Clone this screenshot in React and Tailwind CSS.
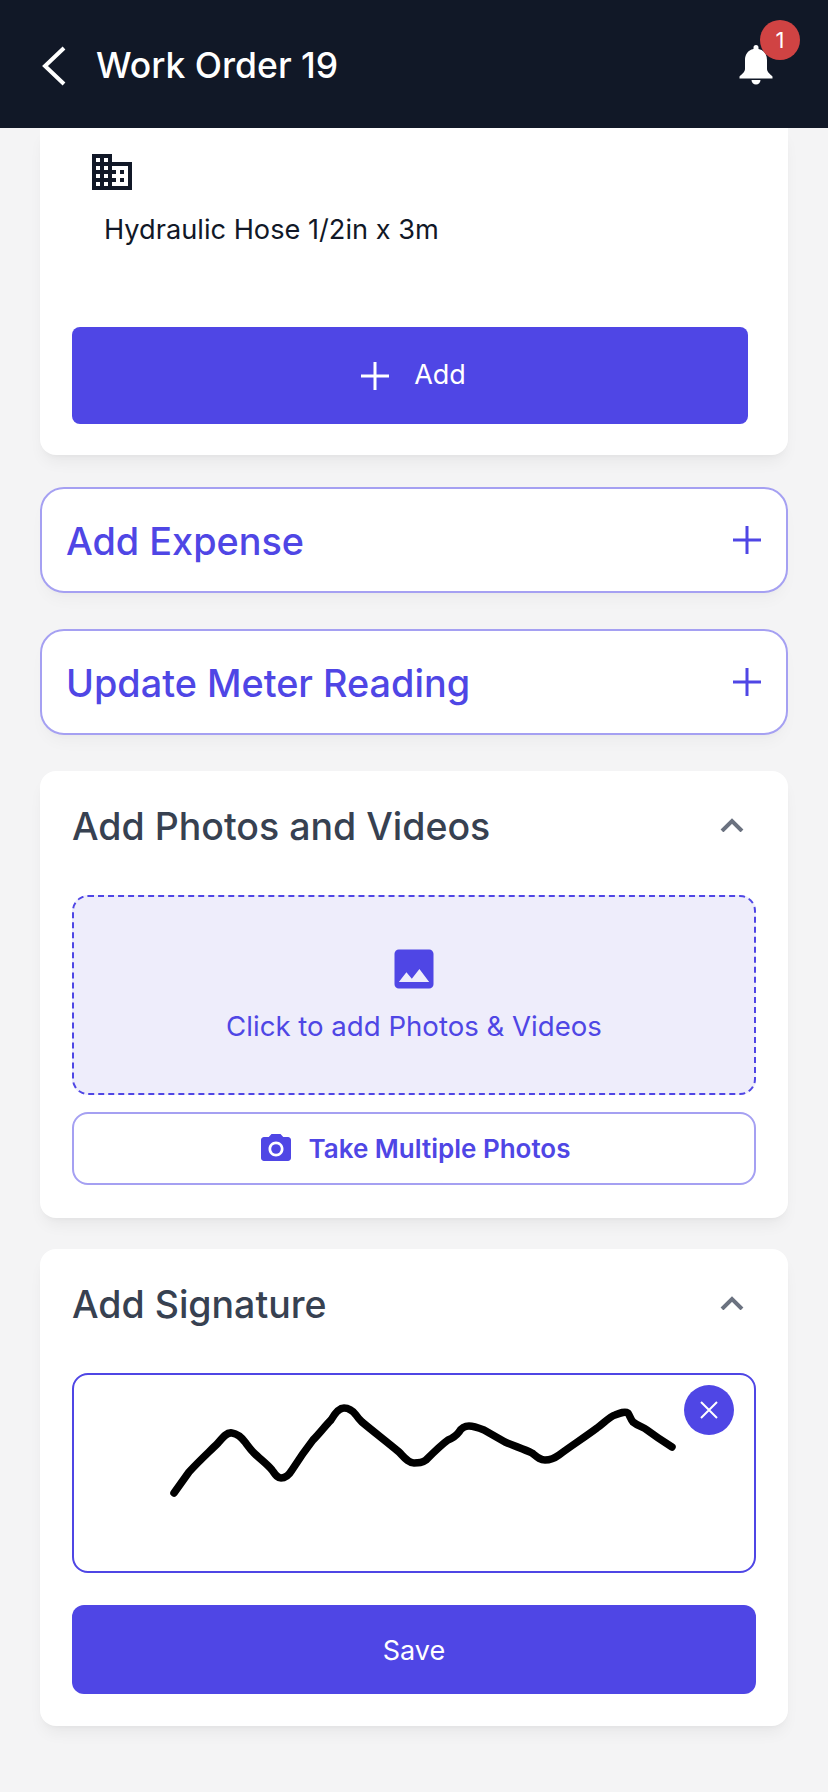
import { MdBusiness, MdImage, MdPhotoCamera } from "react-icons/md";

const signature =
  "M174 1493 L189 1472 C199 1461 209 1452 218 1443 C223 1437 227 1432 232 1433 C238 1434 242 1438 245 1442 C248 1446 250 1449 254 1453 C260 1459 267 1464 272 1470 C275 1474 277 1478 281 1478 C286 1478 289 1475 292 1470 C299 1459 306 1449 313 1440 C320 1433 325 1426 331 1420 C335 1413 339 1408 344 1408 C349 1408 353 1411 356 1415 C358 1418 360 1420 362 1422 C374 1432 387 1442 399 1452 C404 1457 408 1463 414 1463 C419 1463 422 1463 426 1460 C433 1453 441 1445 448 1440 C453 1438 456 1436 459 1432 C462 1427 465 1426 469 1426 C474 1426 479 1428 484 1430 C491 1434 498 1438 505 1442 C514 1446 524 1449 532 1453 C537 1457 540 1460 545 1460 C550 1460 555 1458 559 1455 C571 1446 585 1437 597 1428 C603 1424 609 1417 615 1415 C620 1413 625 1411 628 1413 C630 1416 631 1420 633 1422 C638 1426 643 1427 647 1430 C655 1436 664 1442 672 1447";

function PlusIcon({ className }) {
  return (
    <svg viewBox="0 0 28 28" className={className} fill="none" stroke="currentColor" strokeWidth="3">
      <path d="M14 0V28M0 14H28" />
    </svg>
  );
}

function ChevronUp() {
  return (
    <svg viewBox="0 0 24 14" className="w-6 h-[14px] text-[#6b7280]" fill="none" stroke="currentColor" strokeWidth="4">
      <path d="M2 13L12 3L22 13" />
    </svg>
  );
}

function AddRow({ label, className }) {
  return (
    <div className={`mx-[40px] h-[106px] flex items-center justify-between pl-[24px] pr-[25px] bg-white border-2 border-[#a5a0f2] rounded-[24px] shadow-lg shadow-black/3 ${className}`}>
      <span className="text-[37.8px] font-[450] text-[#4f46e5] pt-[2px]">{label}</span>
      <PlusIcon className="w-7 h-7 text-[#4f46e5]" />
    </div>
  );
}

function CardTitle({ children }) {
  return (
    <div className="flex items-center justify-between pr-[12px]">
      <h2 className="text-[37.5px] leading-[44px] font-[450] text-[#374151] mt-[2px] mb-[-2px]">{children}</h2>
      <ChevronUp />
    </div>
  );
}

export default function App() {
  return (
    <div className="h-[1792px] overflow-hidden bg-[#f4f4f5] font-['Inter',sans-serif]">
      {/* Header */}
      <header className="h-[128px] bg-[#111827] flex items-start justify-between pl-[42px] pr-[28px] relative z-10">
        <div className="flex items-center gap-[30px] mt-[44px]">
          <svg viewBox="0 0 24 40" className="w-6 h-10 text-white" fill="none" stroke="currentColor" strokeWidth="4">
            <path d="M22 2L3 20L22 38" />
          </svg>
          <h1 className="text-[35.5px] leading-[44px] font-[550] text-white">Work Order 19</h1>
        </div>
        <div className="relative w-[60px] h-[80px] mt-[20px]">
          <svg viewBox="0 0 34 40" className="absolute left-[-1px] top-[25px] w-[34px] h-[40px] fill-white">
            <path d="M17 0C15.4 0 14.5 1.2 14.5 2.6V4C8.8 5.2 6 9.6 6 15V24C6 27 3 29 0.5 31.5V33.5H33.5V31.5C31 29 28 27 28 24V15C28 9.6 25.200 5.200 19.500 4V2.600C19.500 1.200 18.600 0 17 0Z" />
            <path d="M12.500 35H21.500C21.500 37.500 19.500 39.500 17 39.500C14.500 39.500 12.500 37.500 12.500 35Z" />
          </svg>
          <span className="absolute left-[20px] top-0 w-10 h-10 rounded-full bg-[#d04343] text-white text-[22px] flex items-center justify-center">1</span>
        </div>
      </header>

      {/* Parts card, scrolled under the header */}
      <section className="mx-[40px] h-[327px] bg-white rounded-b-[16px] shadow-lg shadow-black/5 px-[32px] pt-[20px]">
        <MdBusiness className="w-12 h-12 ml-[16px] text-[#111827]" />
        <p className="ml-[32px] mt-[18px] text-[27.2px] leading-[32px] text-[#111827]">Hydraulic Hose 1/2in x 3m</p>
        <button className="mt-[81px] w-[676px] h-[97px] bg-[#4f46e5] rounded-[8px] flex items-center justify-center gap-[25px] pl-[7px] text-white text-[27px]">
          <PlusIcon className="w-7 h-7" />
          <span>Add</span>
        </button>
      </section>

      <AddRow label="Add Expense" className="mt-[32px]" />
      <AddRow label="Update Meter Reading" className="mt-[36px]" />

      {/* Photos */}
      <section className="mx-[40px] mt-[36px] h-[447px] bg-white rounded-[16px] shadow-lg shadow-black/5 px-[32px] pt-[32px]">
        <CardTitle>Add Photos and Videos</CardTitle>
        <div className="mt-[48px] h-[200px] bg-[#eeedfb] border-2 border-dashed border-[#4f46e5] rounded-[16px] flex flex-col items-center pt-[46px] text-[#4f46e5]">
          <MdImage className="w-[52px] h-[52px]" />
          <span className="mt-[13px] text-[27.6px] leading-[36px]">Click to add Photos &amp; Videos</span>
        </div>
        <button className="mt-[17px] w-full h-[73px] bg-white border-2 border-[#a5a0f2] rounded-[16px] flex items-center justify-center gap-[15px] text-[#4f46e5]">
          <MdPhotoCamera className="w-9 h-9" />
          <span className="text-[26px] font-semibold">Take Multiple Photos</span>
        </button>
      </section>

      {/* Signature */}
      <section className="mx-[40px] mt-[31px] h-[477px] bg-white rounded-[16px] shadow-lg shadow-black/5 px-[32px] pt-[32px]">
        <CardTitle>Add Signature</CardTitle>
        <div className="relative mt-[48px] h-[200px] bg-white border-2 border-[#4f46e5] rounded-[16px]">
          <svg viewBox="72 1373 684 200" className="absolute -inset-[2px] w-[684px] h-[200px]" fill="none" stroke="#000" strokeWidth="7.5" strokeLinecap="round" strokeLinejoin="round">
            <path d={signature} />
          </svg>
          <span className="absolute right-[20px] top-[10px] w-[50px] h-[50px] rounded-full bg-[#4f46e5] flex items-center justify-center">
            <svg viewBox="0 0 18 18" className="w-[18px] h-[18px]" fill="none" stroke="#fff" strokeWidth="2">
              <path d="M1 1L17 17M17 1L1 17" />
            </svg>
          </span>
        </div>
        <button className="mt-[32px] w-full h-[89px] pt-[3px] bg-[#4f46e5] rounded-[12px] text-white text-[27px]">Save</button>
      </section>
    </div>
  );
}
